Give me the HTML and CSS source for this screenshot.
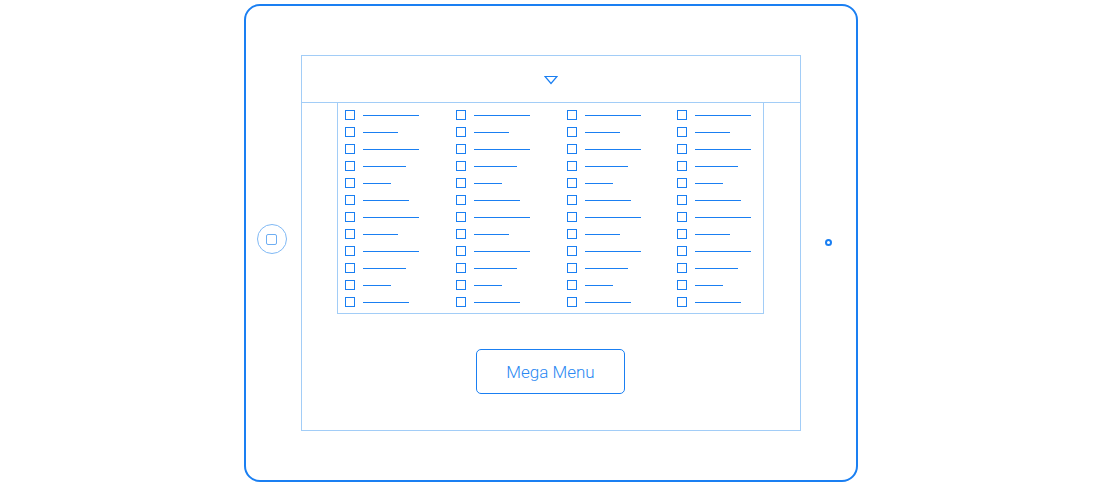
FILE: index.html
```html
<!DOCTYPE html>
<html lang="en">
<head>
  <meta charset="UTF-8">
  <title>Mega Menu - Tablet</title>
  <link rel="stylesheet" href="styles.css">
</head>
<body>
  <div class="tablet">
    <div class="home-btn"><span class="home-square"></span></div>

    <div class="screen">
      <div class="topbar">
        <svg class="caret" width="14" height="10" viewBox="0 0 14 10">
          <path d="M1 1.5 H13 L7 8.5 Z" fill="none" stroke="#1a7ff2" stroke-width="1.2" stroke-linejoin="miter"/>
        </svg>
      </div>
      <div class="content">
        <div class="mega-panel" id="panel"></div>
        <button class="mega-btn">Mega Menu</button>
      </div>
    </div>

    <div class="camera"></div>
  </div>

  <script>
    const panel = document.getElementById('panel');
    const widths = [56, 35, 56, 43, 28, 46];

    for (let c = 0; c < 4; c++) {
      const col = document.createElement('div');
      col.className = 'menu-col';
      for (let r = 0; r < 12; r++) {
        const item = document.createElement('div');
        item.className = 'menu-item';
        item.innerHTML = '<span class="check"></span><span class="bar"></span>';
        item.querySelector('.bar').style.width = widths[r % 6] + 'px';
        col.appendChild(item);
      }
      panel.appendChild(col);
    }
  </script>
</body>
</html>
```

FILE: styles.css
```css
:root {
  --blue: #1a7ff2;
  --light-blue: #a2cdf7;
  --font: 'Roboto', 'Liberation Sans', sans-serif;
}
* {
  box-sizing: border-box;
}
body {
  margin: 0;
  background: #fff;
  font-family: var(--font);
  display: flex;
  justify-content: center;
  padding-top: 4px;
}
.tablet {
  width: 614px;
  height: 478px;
  margin-left: 1px;
  border: 2px solid var(--blue);
  border-radius: 16px;
  display: grid;
  grid-template-columns: 55px 500px 55px;
  align-items: center;
}
.home-btn {
  justify-self: center;
  width: 30px;
  height: 30px;
  margin-top: -8px;
  margin-right: 3px;
  border: 1px solid #80b9f5;
  border-radius: 50%;
  display: flex;
  align-items: center;
  justify-content: center;
}
.home-square {
  width: 11px;
  height: 11px;
  border: 1px solid #6eaef3;
  border-radius: 2px;
}
.camera {
  justify-self: center;
  width: 7px;
  height: 7px;
  margin-top: -2px;
  border: 2px solid var(--blue);
  border-radius: 50%;
}
.screen {
  width: 500px;
  height: 376px;
  border: 1px solid var(--light-blue);
  display: flex;
  flex-direction: column;
}
.topbar {
  height: 47px;
  border-bottom: 1px solid var(--light-blue);
  display: flex;
  align-items: center;
  justify-content: center;
  flex-shrink: 0;
}
.caret {
  margin-top: 2px;
}
.content {
  display: flex;
  flex-direction: column;
  align-items: center;
}
.mega-panel {
  width: 427px;
  margin-left: -1px;
  border: 1px solid var(--light-blue);
  border-top: none;
  padding: 7px 0 6px 7px;
  display: grid;
  grid-template-columns: 111px 111px 110px 110px;
}
.menu-col {
  display: flex;
  flex-direction: column;
  gap: 7px;
}
.menu-item {
  display: flex;
  align-items: center;
  gap: 8px;
  height: 10px;
}
.check {
  width: 10px;
  height: 10px;
  border: 1px solid var(--blue);
  flex-shrink: 0;
}
.bar {
  height: 1px;
  background: var(--blue);
}
.mega-btn {
  margin-top: 35px;
  width: 149px;
  height: 45px;
  border: 1px solid var(--blue);
  border-radius: 5px;
  background: #fff;
  color: #2a88f2;
  font-family: var(--font);
  font-weight: 300;
  font-size: 17px;
  padding: 0;
  cursor: pointer;
}
```
